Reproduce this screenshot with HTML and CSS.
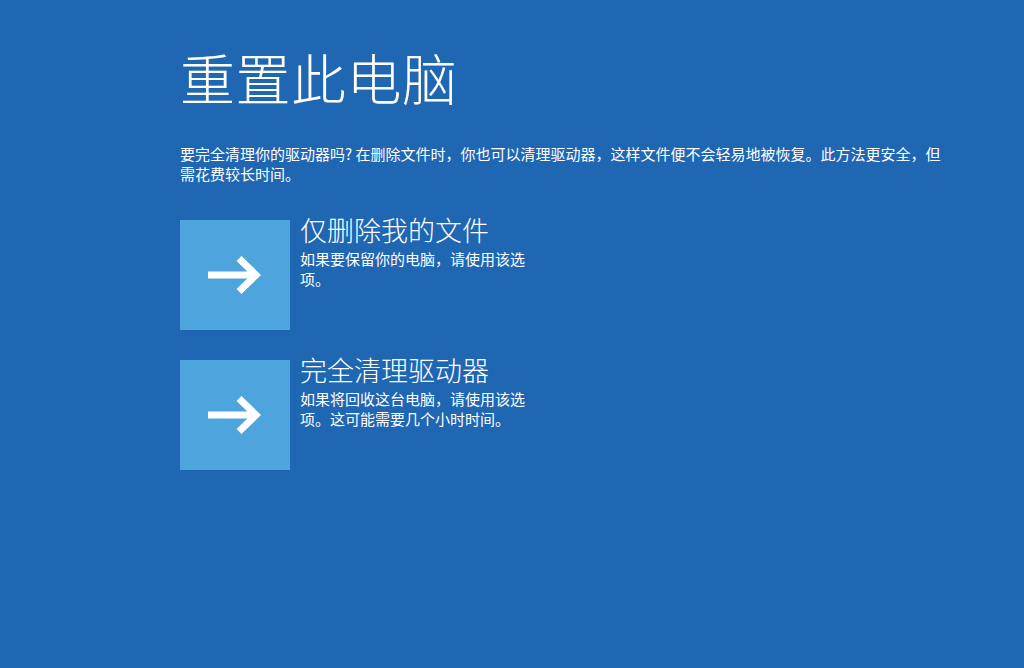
FILE: index.html
```html
<!DOCTYPE html>
<html lang="zh-CN">
<head>
<meta charset="utf-8">
<title>重置此电脑</title>
<link rel="stylesheet" href="styles.css">
</head>
<body>
<main class="page">
  <h1 class="title">重置此电脑</h1>
  <p class="intro">要完全清理你的驱动器吗? 在删除文件时，你也可以清理驱动器，这样文件便不会轻易地被恢复。此方法更安全，但需花费较长时间。</p>
  <div class="options">
    <div class="option">
      <div class="tile">
        <svg class="arrow" viewBox="0 0 54 40" width="54" height="40"><path d="M0 20 H48 M31 3.5 L48 20 L31 36.5" fill="none" stroke="#fff" stroke-width="7"/></svg>
      </div>
      <div class="text">
        <div class="opt-title">仅删除我的文件</div>
        <div class="opt-desc">如果要保留你的电脑，请使用该选项。</div>
      </div>
    </div>
    <div class="option">
      <div class="tile">
        <svg class="arrow" viewBox="0 0 54 40" width="54" height="40"><path d="M0 20 H48 M31 3.5 L48 20 L31 36.5" fill="none" stroke="#fff" stroke-width="7"/></svg>
      </div>
      <div class="text">
        <div class="opt-title">完全清理驱动器</div>
        <div class="opt-desc">如果将回收这台电脑，请使用该选项。这可能需要几个小时时间。</div>
      </div>
    </div>
  </div>
</main>
</body>
</html>
```

FILE: styles.css
```css
html, body {
  margin: 0;
  padding: 0;
  height: 100%;
}
body {
  background: #1f66b3;
  color: #ffffff;
  font-family: "Noto Sans CJK SC", "Noto Sans", sans-serif;
}
.page {
  padding: 38px 0 0 180px;
}
.title {
  margin: 0;
  font-size: 55px;
  font-weight: 300;
  line-height: 76px;
  letter-spacing: 0.5px;
}
.intro {
  margin: 30px 0 0 0;
  width: 775px;
  font-size: 15px;
  line-height: 20px;
}
.options {
  margin-top: 36px;
  display: flex;
  flex-direction: column;
  gap: 30px;
}
.option {
  display: flex;
  gap: 10px;
}
.tile {
  width: 110px;
  height: 110px;
  background: #4ea5dd;
  display: flex;
  align-items: center;
  justify-content: center;
  flex-shrink: 0;
}
.arrow {
  display: block;
}
.text {
  width: 232px;
  margin-top: -9px;
}
.opt-title {
  font-size: 27px;
  line-height: 38px;
  font-weight: 300;
}
.opt-desc {
  font-size: 15px;
  line-height: 20px;
}
```
